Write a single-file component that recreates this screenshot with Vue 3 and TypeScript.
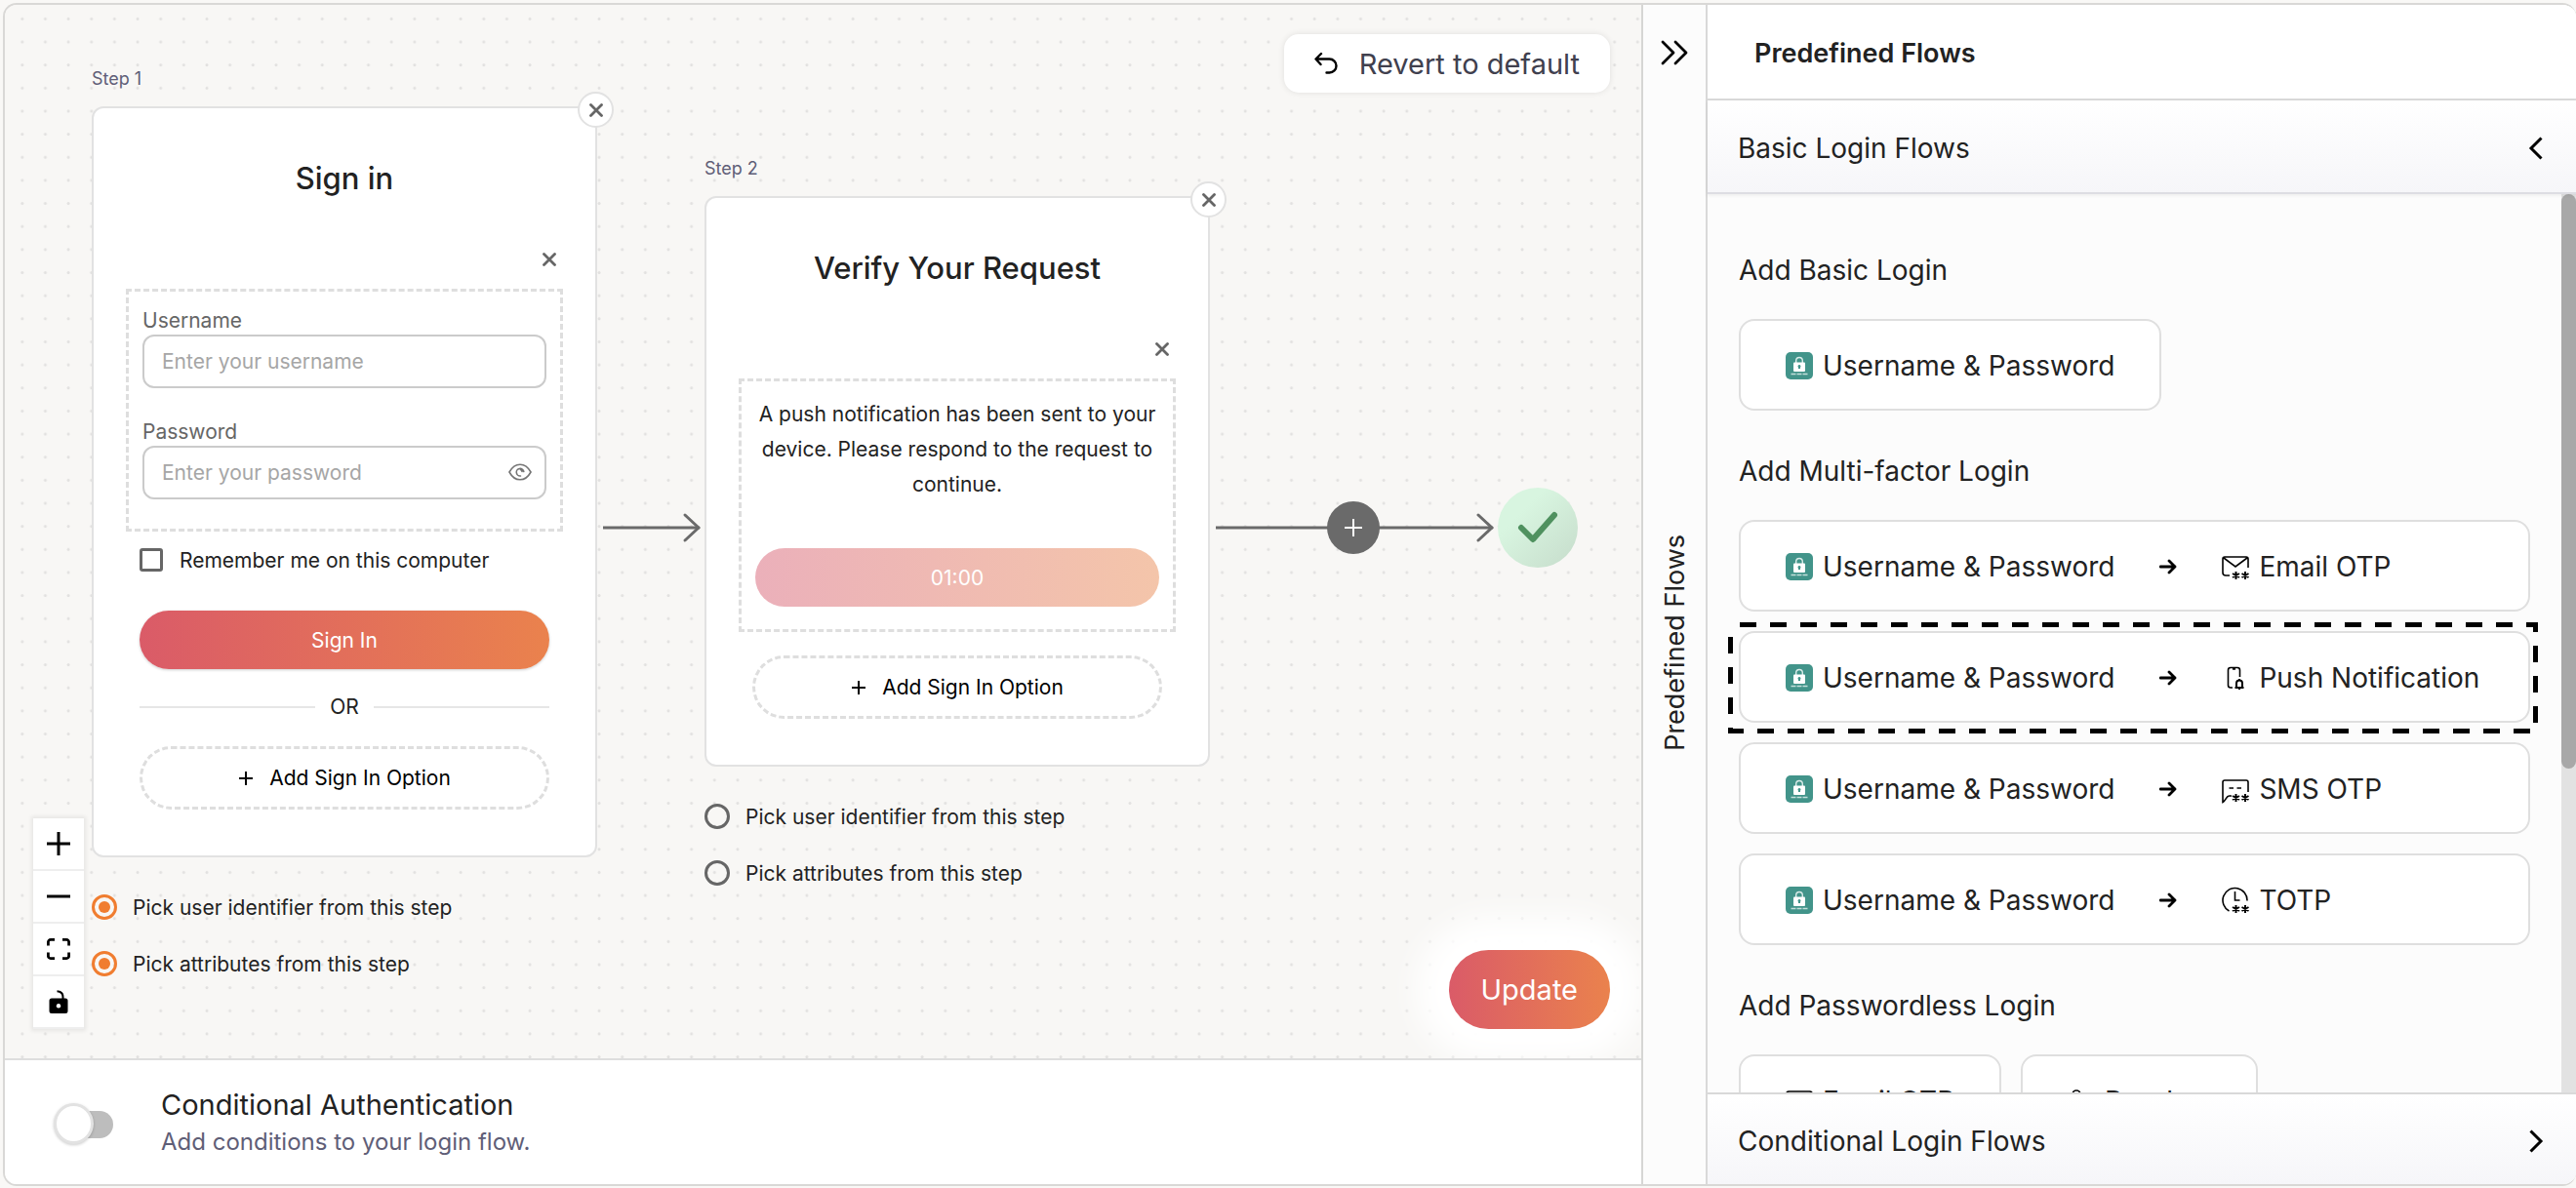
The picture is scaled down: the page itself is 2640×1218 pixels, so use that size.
<script setup lang="ts">
import { reactive, ref } from 'vue'

type FactorIcon = 'lock' | 'email' | 'push' | 'sms' | 'totp' | 'passkey'

interface Factor {
  icon: FactorIcon
  label: string
}

interface Flow {
  factors: Factor[]
  highlighted?: boolean
}

interface FlowGroup {
  title: string
  flows: Flow[]
  inline?: boolean
}

const password: Factor = { icon: 'lock', label: 'Username & Password' }

const groups: FlowGroup[] = [
  { title: 'Add Basic Login', inline: true, flows: [{ factors: [password] }] },
  {
    title: 'Add Multi-factor Login',
    flows: [
      { factors: [password, { icon: 'email', label: 'Email OTP' }] },
      { factors: [password, { icon: 'push', label: 'Push Notification' }], highlighted: true },
      { factors: [password, { icon: 'sms', label: 'SMS OTP' }] },
      { factors: [password, { icon: 'totp', label: 'TOTP' }] },
    ],
  },
  {
    title: 'Add Passwordless Login',
    inline: true,
    flows: [
      { factors: [{ icon: 'email', label: 'Email OTP' }] },
      { factors: [{ icon: 'passkey', label: 'Passkey' }] },
    ],
  },
]

const stars = 'M14.5 19v8M11 21l7 4M18 21l-7 4M24 19v8M20.5 21l7 4M27.5 21l-7 4'

const outlines: Record<Exclude<FactorIcon, 'lock'>, string[]> = {
  email: ['M8 23H4a3 3 0 0 1-3-3V6a2 2 0 0 1 2-2h22a2 2 0 0 1 2 2v9M2 5l12 9 12-9', stars],
  push: [
    'M11 24H9a2.500 2.500 0 0 1-2.500-2.500V6A2.500 2.500 0 0 1 9 3.500h7A2.500 2.500 0 0 1 18.500 6v7M11 5h3',
    'M13.500 24h9M15 23.500v-4a3 3 0 0 1 6 0v4M18 15v2M18 25v1',
  ],
  sms: ['M10 21H7.500C4.500 21 4 26 1 27.500V7a2 2 0 0 1 2-2h22a2 2 0 0 1 2 2v10M7.500 13h4.500M15.500 13h4.500', stars],
  totp: ['M7.500 25A12.500 12.500 0 1 1 26 14.500M13.500 5v9h5', stars],
  passkey: ['M13 10a4 4 0 1 1-8 0V7a4 4 0 1 1 8 0zM1 26v-4a6 6 0 0 1 6-6h6', 'M22 13a4 4 0 1 0 .1 0M22 21v6h3'],
}

const picked = reactive({ identifier: 'step-1', attributes: 'step-1' })
const username = ref('')
const secret = ref('')
const remember = ref(false)
const conditional = ref(false)
</script>

<template>
  <div class="page">
    <div class="frame">
      <main class="editor">
        <section class="canvas" aria-label="Login flow">
          <svg class="dots" aria-hidden="true">
            <defs>
              <pattern id="grid-dots" width="23.65" height="23.65" patternUnits="userSpaceOnUse">
                <circle cx="17.8" cy="14.4" r="1.5" fill="#e2e1e0" />
              </pattern>
            </defs>
            <rect width="100%" height="100%" fill="url(#grid-dots)" />
          </svg>

          <article class="step step-one">
            <p class="step-label">Step 1</p>
            <div class="card">
              <button class="card-close" type="button" aria-label="Remove step 1">
                <svg width="14" height="14" viewBox="0 0 14 14"><path d="M1.500 1.500l11 11M12.500 1.500l-11 11" /></svg>
              </button>
              <h2>Sign in</h2>
              <button class="option-close" type="button" aria-label="Remove option">
                <svg width="14" height="14" viewBox="0 0 14 14"><path d="M1.500 1.500l11 11M12.500 1.500l-11 11" /></svg>
              </button>
              <div class="option fields">
                <div class="field">
                  <label for="username">Username</label>
                  <input id="username" v-model="username" type="text" placeholder="Enter your username" />
                </div>
                <div class="field">
                  <label for="password">Password</label>
                  <div class="secret">
                    <input id="password" v-model="secret" type="password" placeholder="Enter your password" />
                    <button class="eye" type="button" aria-label="Show password">
                      <svg width="24" height="18" viewBox="0 0 24 18" fill="none" stroke="#757575" stroke-width="1.6" stroke-linecap="round">
                        <path d="M1 9C4 3.500 8 1.200 12 1.200S20 3.500 23 9C20 14.500 16 16.800 12 16.800S4 14.500 1 9z" />
                        <path d="M15.800 8.500A3.800 3.800 0 1 0 12.500 13M12.500 6.500a2.500 2.500 0 0 1 1.500 2" />
                      </svg>
                    </button>
                  </div>
                </div>
              </div>
              <div class="actions">
                <label class="remember">
                  <input v-model="remember" type="checkbox" />
                  Remember me on this computer
                </label>
                <button class="primary" type="button">Sign In</button>
                <div class="divider">OR</div>
                <button class="add-option" type="button">
                  <svg width="16" height="16" viewBox="0 0 16 16"><path d="M8 1v14M1 8h14" /></svg>
                  Add Sign In Option
                </button>
              </div>
            </div>
            <div class="picks">
              <label><input v-model="picked.identifier" type="radio" name="identifier" value="step-1" />Pick user identifier from this step</label>
              <label><input v-model="picked.attributes" type="radio" name="attributes" value="step-1" />Pick attributes from this step</label>
            </div>
          </article>

          <svg class="edge edge-one" height="34" aria-hidden="true">
            <line x1="0" y1="17" x2="98" y2="17" />
            <path d="M84 4l14 13-14 13" />
          </svg>

          <article class="step step-two">
            <p class="step-label">Step 2</p>
            <div class="card">
              <button class="card-close" type="button" aria-label="Remove step 2">
                <svg width="14" height="14" viewBox="0 0 14 14"><path d="M1.500 1.500l11 11M12.500 1.500l-11 11" /></svg>
              </button>
              <h2>Verify Your Request</h2>
              <button class="option-close" type="button" aria-label="Remove option">
                <svg width="14" height="14" viewBox="0 0 14 14"><path d="M1.500 1.500l11 11M12.500 1.500l-11 11" /></svg>
              </button>
              <div class="option notice">
                <p>A push notification has been sent to your device. Please respond to the request to continue.</p>
                <button class="primary" type="button" disabled>01:00</button>
              </div>
              <div class="actions spaced">
                <button class="add-option" type="button">
                  <svg width="16" height="16" viewBox="0 0 16 16"><path d="M8 1v14M1 8h14" /></svg>
                  Add Sign In Option
                </button>
              </div>
            </div>
            <div class="picks">
              <label><input v-model="picked.identifier" type="radio" name="identifier" value="step-2" />Pick user identifier from this step</label>
              <label><input v-model="picked.attributes" type="radio" name="attributes" value="step-2" />Pick attributes from this step</label>
            </div>
          </article>

          <svg class="edge edge-two" height="34" aria-hidden="true">
            <line x1="0" y1="17" x2="283" y2="17" />
            <path d="M269 4l14 13-14 13" />
          </svg>
          <button class="add-step" type="button" aria-label="Add step">
            <svg width="20" height="20" viewBox="0 0 20 20"><path d="M10 1v18M1 10h18" /></svg>
          </button>
          <div class="success" role="img" aria-label="Complete">
            <svg width="42" height="34" viewBox="0 0 42 34"><path d="M4 17l12 12L38 4" /></svg>
          </div>

          <button class="revert" type="button">
            <svg width="24" height="24" viewBox="0 0 24 24" fill="none" stroke="#000" stroke-width="2.400" stroke-linecap="round" stroke-linejoin="round">
              <path d="M7 2L1.500 7.500 6.500 13M2 7.500h13.500a7 7 0 0 1 0 14H12.500" />
            </svg>
            Revert to default
          </button>

          <div class="controls">
            <button type="button" aria-label="Zoom in">
              <svg width="24" height="24" viewBox="0 0 24 24"><path d="M12 0v24M0 12h24" stroke="#000" stroke-width="3" /></svg>
            </button>
            <button type="button" aria-label="Zoom out">
              <svg width="24" height="24" viewBox="0 0 24 24"><path d="M0 12h24" stroke="#000" stroke-width="3" /></svg>
            </button>
            <button type="button" aria-label="Fit view">
              <svg width="24" height="24" viewBox="0 0 24 24" fill="none" stroke="#000" stroke-width="2.800">
                <path d="M1.400 8.500V5A2.500 2.500 0 0 1 4 2.400h4M16 2.400h4A2.500 2.500 0 0 1 22.600 5v3.500M22.600 15.500V19a2.500 2.500 0 0 1-2.600 2.600h-4M8 21.600H4A2.500 2.500 0 0 1 1.400 19v-3.500" />
              </svg>
            </button>
            <button type="button" aria-label="Toggle interactivity">
              <svg width="24" height="24" viewBox="0 0 24 24">
                <path d="M10.500 1.200c4 .3 6 2.500 6 6V10" fill="none" stroke="#000" stroke-width="2" />
                <path fill-rule="evenodd" d="M5 8.500h14a2.500 2.500 0 0 1 2.500 2.500v10.500A2.500 2.500 0 0 1 19 24H5a2.500 2.500 0 0 1-2.500-2.500V11A2.500 2.500 0 0 1 5 8.500zm7 5.500a2.300 2.300 0 1 0 .01 0z" />
              </svg>
            </button>
          </div>

          <button class="update" type="button">Update</button>
        </section>

        <section class="conditional">
          <input id="conditional" v-model="conditional" class="switch" type="checkbox" role="switch" />
          <label for="conditional">
            <span class="conditional-title">Conditional Authentication</span>
            <span class="conditional-hint">Add conditions to your login flow.</span>
          </label>
        </section>
      </main>

      <nav class="rail">
        <button type="button" aria-label="Collapse panel">
          <svg width="28" height="26" viewBox="0 0 28 26"><path d="M2 2l11 11L2 24M15 2l11 11-11 11" /></svg>
        </button>
        <span>Predefined Flows</span>
      </nav>

      <aside class="panel">
        <h1>Predefined Flows</h1>
        <button class="section-head open" type="button" aria-expanded="true">
          Basic Login Flows
          <svg width="16" height="24" viewBox="0 0 16 24"><path d="M13.500 1.500L3 12l10.500 10.500" /></svg>
        </button>
        <div class="scroller">
          <div class="flows">
            <section v-for="group in groups" :key="group.title" class="group">
              <h3>{{ group.title }}</h3>
              <div class="list" :class="{ inline: group.inline }">
                <div v-for="(flow, index) in group.flows" :key="index" class="flow-wrap">
                  <button class="flow" type="button">
                    <template v-for="(factor, position) in flow.factors" :key="factor.label">
                      <svg v-if="position > 0" class="then" width="18" height="16" viewBox="0 0 18 16">
                        <path d="M1 8h15M10 2l6 6-6 6" />
                      </svg>
                      <span class="factor">
                        <svg v-if="factor.icon === 'lock'" width="28" height="28" viewBox="0 0 28 28">
                          <rect width="28" height="28" rx="5" fill="#42948a" />
                          <path d="M10.700 11V8.800a3.300 3.300 0 0 1 6.600 0V11" fill="none" stroke="#d9ebe8" stroke-width="1.400" />
                          <rect x="8" y="10.500" width="12" height="9.500" rx="1" fill="#fff" />
                          <path d="M14 13a1.500 1.500 0 0 1 1 2.600V17h-2v-1.400A1.500 1.500 0 0 1 14 13z" fill="#42948a" />
                          <path d="M5.500 22.500h5M11.500 22.500h5M17.500 22.500h5" stroke="#c3dfdb" stroke-width="1.300" />
                        </svg>
                        <svg v-else class="outline" width="28" height="28" viewBox="0 0 28 28">
                          <path v-for="d in outlines[factor.icon]" :key="d" :d="d" />
                        </svg>
                        {{ factor.label }}
                      </span>
                    </template>
                  </button>
                  <svg v-if="flow.highlighted" class="marker" aria-hidden="true"><rect x="2.500" y="2.500" /></svg>
                </div>
              </div>
            </section>
          </div>
          <div class="track"><div class="thumb"></div></div>
        </div>
        <button class="section-head closed" type="button" aria-expanded="false">
          Conditional Login Flows
          <svg width="16" height="24" viewBox="0 0 16 24"><path d="M2.500 1.500L13 12 2.500 22.500" /></svg>
        </button>
      </aside>
    </div>
  </div>
</template>

<style>
body {
  margin: 0;
  background: #f9f8f6;
}
</style>

<style scoped>
*,
*::before,
*::after {
  box-sizing: border-box;
}

.page {
  height: 100vh;
  padding: 3px 0 2px 3px;
  font-family: Inter, sans-serif;
  font-size: 21px;
  color: #222;
  overflow: hidden;
}

.frame {
  display: flex;
  height: 100%;
  border: 2px solid #d9d8d6;
  border-right: 0;
  border-radius: 14px;
  overflow: hidden;
}

button,
input {
  font: inherit;
  color: inherit;
  margin: 0;
}

button {
  padding: 0;
  border: 0;
  background: none;
  cursor: pointer;
}

h1,
h2,
h3,
p {
  margin: 0;
}

svg {
  display: block;
  flex: none;
}

.editor {
  flex: 1;
  min-width: 0;
  display: flex;
  flex-direction: column;
}

.canvas {
  position: relative;
  flex: 1;
  background: #f8f7f5;
  overflow: hidden;
}

.dots {
  position: absolute;
  inset: 0;
  width: 100%;
  height: 100%;
}

.step {
  position: absolute;
  width: 518px;
}

.step-one {
  left: 89px;
  top: 64px;
}

.step-two {
  left: 717px;
  top: 156px;
}

.step-label {
  font-size: 18px;
  line-height: 24px;
  margin-bottom: 16px;
  color: #5f5e77;
}

.card {
  position: relative;
  padding: 52px 33px 47px;
  border: 2px solid #e2e2e2;
  border-radius: 12px;
  background: #fff;
}

.card-close {
  position: absolute;
  top: -17px;
  right: -19px;
  width: 37px;
  height: 37px;
  display: grid;
  place-items: center;
  border: 2px solid #e2e2e2;
  border-radius: 50%;
  background: #fff;
}

.card-close path,
.option-close path {
  stroke: #666;
  stroke-width: 2.8;
  stroke-linecap: round;
}

.card h2 {
  font-size: 31px;
  line-height: 40px;
  font-weight: 500;
  text-align: center;
}

.option-close {
  display: grid;
  place-items: center;
  width: 24px;
  height: 24px;
  margin: 51px 2px 18px auto;
}

.option {
  border: 3px dashed #dedede;
  padding: 17px 14px 30px;
}

.fields {
  display: grid;
  gap: 32px;
}

.field {
  display: grid;
  gap: 1px;
}

.field label {
  line-height: 26px;
  color: #666;
}

.field input {
  width: 100%;
  height: 55px;
  padding: 0 18px;
  border: 2px solid #cbcbcb;
  border-radius: 12px;
  background: #fff;
  outline: 0;
}

.field input::placeholder {
  color: #a6a6a6;
  opacity: 1;
}

.secret {
  position: relative;
}

.eye {
  position: absolute;
  right: 15px;
  top: 18px;
}

.notice {
  padding: 16px 14px 23px;
  text-align: center;
}

.notice p {
  line-height: 36px;
  margin-bottom: 47px;
}

.actions {
  display: flex;
  flex-direction: column;
  margin: 15px 14px 0;
}

.actions.spaced {
  margin-top: 24px;
}

.remember {
  display: flex;
  align-items: center;
  gap: 17px;
  height: 28px;
  margin-bottom: 38px;
}

.remember input {
  appearance: none;
  width: 24px;
  height: 24px;
  border: 3px solid #666;
  border-radius: 3px;
  background: #fff;
}

.primary {
  width: 100%;
  height: 60px;
  border-radius: 30px;
  background: linear-gradient(90deg, #da5b68, #ea824d);
  box-shadow: 0 1px 3px rgba(0, 0, 0, 0.2);
  color: #fff;
}

.primary:disabled {
  background: linear-gradient(90deg, #ebb0ba, #f4c5aa);
  box-shadow: none;
}

.divider {
  display: flex;
  align-items: center;
  gap: 15px;
  line-height: 26px;
  margin: 26px 0 27px;
}

.divider::before,
.divider::after {
  content: '';
  flex: 1;
  height: 2px;
  background: #e6e6e6;
}

.add-option {
  display: flex;
  align-items: center;
  justify-content: center;
  gap: 16px;
  height: 65px;
  border: 3px dashed #dedede;
  border-radius: 33px;
  color: #000;
}

.add-option path {
  stroke: #000;
  stroke-width: 2;
}

.picks {
  display: grid;
  gap: 30px;
  margin-top: 37px;
}

.picks label {
  display: flex;
  align-items: center;
  gap: 16px;
  height: 28px;
}

.picks input {
  appearance: none;
  width: 26px;
  height: 26px;
  padding: 4px;
  border: 3px solid #666;
  border-radius: 50%;
}

.picks input:checked {
  border-color: #f07d30;
  background: #f07d30 content-box;
}

.edge {
  position: absolute;
  fill: none;
  stroke: #6a6a6a;
  stroke-width: 3;
  stroke-linecap: round;
  stroke-linejoin: round;
}

.edge-one {
  left: 613px;
  top: 519px;
  width: 104px;
}

.edge-two {
  left: 1241px;
  top: 519px;
  width: 290px;
}

.add-step {
  position: absolute;
  left: 1355px;
  top: 509px;
  width: 54px;
  height: 54px;
  display: grid;
  place-items: center;
  border-radius: 50%;
  background: #6a6a6a;
}

.add-step path {
  stroke: #fff;
  stroke-width: 2;
}

.success {
  position: absolute;
  left: 1530px;
  top: 495px;
  width: 82px;
  height: 82px;
  display: grid;
  place-items: center;
  border-radius: 50%;
  background: linear-gradient(135deg, #d8f5e0 30%, #c6dccb);
}

.success path {
  fill: none;
  stroke: #4f915f;
  stroke-width: 6;
  stroke-linecap: round;
  stroke-linejoin: round;
}

.revert {
  position: absolute;
  top: 30px;
  right: 32px;
  display: flex;
  align-items: center;
  gap: 22px;
  height: 60px;
  padding: 0 31px;
  border-radius: 15px;
  background: #fff;
  box-shadow: 0 0 6px rgba(0, 0, 0, 0.1);
  font-size: 29px;
  color: #40404e;
}

.controls {
  position: absolute;
  left: 29px;
  bottom: 30px;
  width: 52px;
  box-shadow: 0 0 4px 2px rgba(0, 0, 0, 0.07);
}

.controls button {
  display: grid;
  place-items: center;
  width: 52px;
  height: 54px;
  border-bottom: 2px solid #eee;
  background: #fff;
}

.update {
  position: absolute;
  right: 32px;
  bottom: 30px;
  height: 81px;
  padding: 0 33px;
  border-radius: 41px;
  background: linear-gradient(90deg, #da5b68, #ea824d);
  box-shadow: 0 0 32px 34px #fff;
  font-size: 29px;
  color: #fff;
}

.conditional {
  display: flex;
  align-items: center;
  gap: 49px;
  height: 129px;
  padding: 2px 50px 0;
  border-top: 2px solid #dedede;
  background: #fff;
}

.conditional label {
  display: grid;
  line-height: 38px;
}

.conditional-title {
  font-size: 29px;
}

.conditional-hint {
  font-size: 24px;
  color: #5f5e77;
}

.switch {
  appearance: none;
  position: relative;
  width: 61px;
  height: 42px;
}

.switch::before {
  content: '';
  position: absolute;
  inset: 8px 0 6px 14px;
  border-radius: 14px;
  background: #bdbdbd;
}

.switch::after {
  content: '';
  position: absolute;
  top: 0;
  left: 0;
  width: 41px;
  height: 42px;
  border: 3px solid #e2e2e2;
  border-radius: 50%;
  background: #fff;
  box-shadow: 0 1px 3px rgba(0, 0, 0, 0.2);
}

.rail {
  display: flex;
  flex-direction: column;
  align-items: center;
  width: 66px;
  padding-top: 36px;
  border-left: 2px solid #d6d6d4;
  background: #fcfcfc;
  font-size: 27px;
}

.rail path {
  fill: none;
  stroke: #000;
  stroke-width: 2.8;
  stroke-linecap: round;
  stroke-linejoin: round;
}

.rail button {
  margin-bottom: 36px;
}

.rail span {
  margin: auto 0;
  writing-mode: vertical-rl;
  transform: rotate(180deg);
}

.panel {
  display: flex;
  flex-direction: column;
  width: 892px;
  min-height: 0;
  border-left: 2px solid #d9d9d9;
  background: #fcfcfc;
  font-size: 28px;
}

.panel h1 {
  height: 98px;
  padding-left: 48px;
  border-bottom: 2px solid #dbdbdb;
  background: #fff;
  font-size: 27px;
  line-height: 99px;
  font-weight: 600;
}

.section-head {
  display: flex;
  flex: none;
  align-items: center;
  justify-content: space-between;
  padding: 3px 33px 0 31px;
  background: linear-gradient(#fff, #f6f6f9);
}

.section-head path {
  fill: none;
  stroke: #000;
  stroke-width: 3;
}

.open {
  position: relative;
  height: 96px;
  border-bottom: 2px solid #dddde3;
  box-shadow: 0 1px 4px rgba(0, 0, 0, 0.08);
}

.closed {
  height: 94px;
  border-top: 2px solid #d9d9d9;
}

.scroller {
  display: flex;
  flex: 1;
  min-height: 0;
}

.flows {
  flex: 1;
  display: flex;
  flex-direction: column;
  gap: 44px;
  padding: 60px 32px;
  overflow-y: auto;
  scrollbar-width: none;
}

.group {
  display: grid;
  flex: none;
  gap: 32px;
}

.group h3 {
  font-size: 28px;
  line-height: 36px;
  font-weight: 400;
}

.list {
  display: grid;
  gap: 20px;
}

.list.inline {
  display: flex;
}

.flow-wrap {
  position: relative;
}

.flow {
  display: flex;
  align-items: center;
  gap: 46px;
  width: 100%;
  height: 94px;
  padding: 2px 46px 0;
  border: 2px solid #dfdfdf;
  border-radius: 16px;
  background: #fff;
}

.factor {
  display: flex;
  align-items: center;
  gap: 10px;
  white-space: nowrap;
}

.then path {
  fill: none;
  stroke: #000;
  stroke-width: 2.8;
  stroke-linecap: round;
  stroke-linejoin: round;
}

.outline {
  fill: none;
  stroke: #000;
  stroke-width: 1.6;
  overflow: visible;
}

.outline path + path {
  stroke-width: 2;
}

.marker {
  position: absolute;
  inset: -9px -8px -11px -11px;
  width: calc(100% + 19px);
  height: calc(100% + 20px);
  pointer-events: none;
}

.marker rect {
  width: calc(100% - 5px);
  height: calc(100% - 5px);
  fill: none;
  stroke: #000;
  stroke-width: 5;
  stroke-dasharray: 17 14;
  stroke-dashoffset: 21.5px;
}

.track {
  width: 15px;
  background: #e2e2e2;
}

.thumb {
  height: 64%;
  border-radius: 8px;
  background: #a8a8a8;
}
</style>
